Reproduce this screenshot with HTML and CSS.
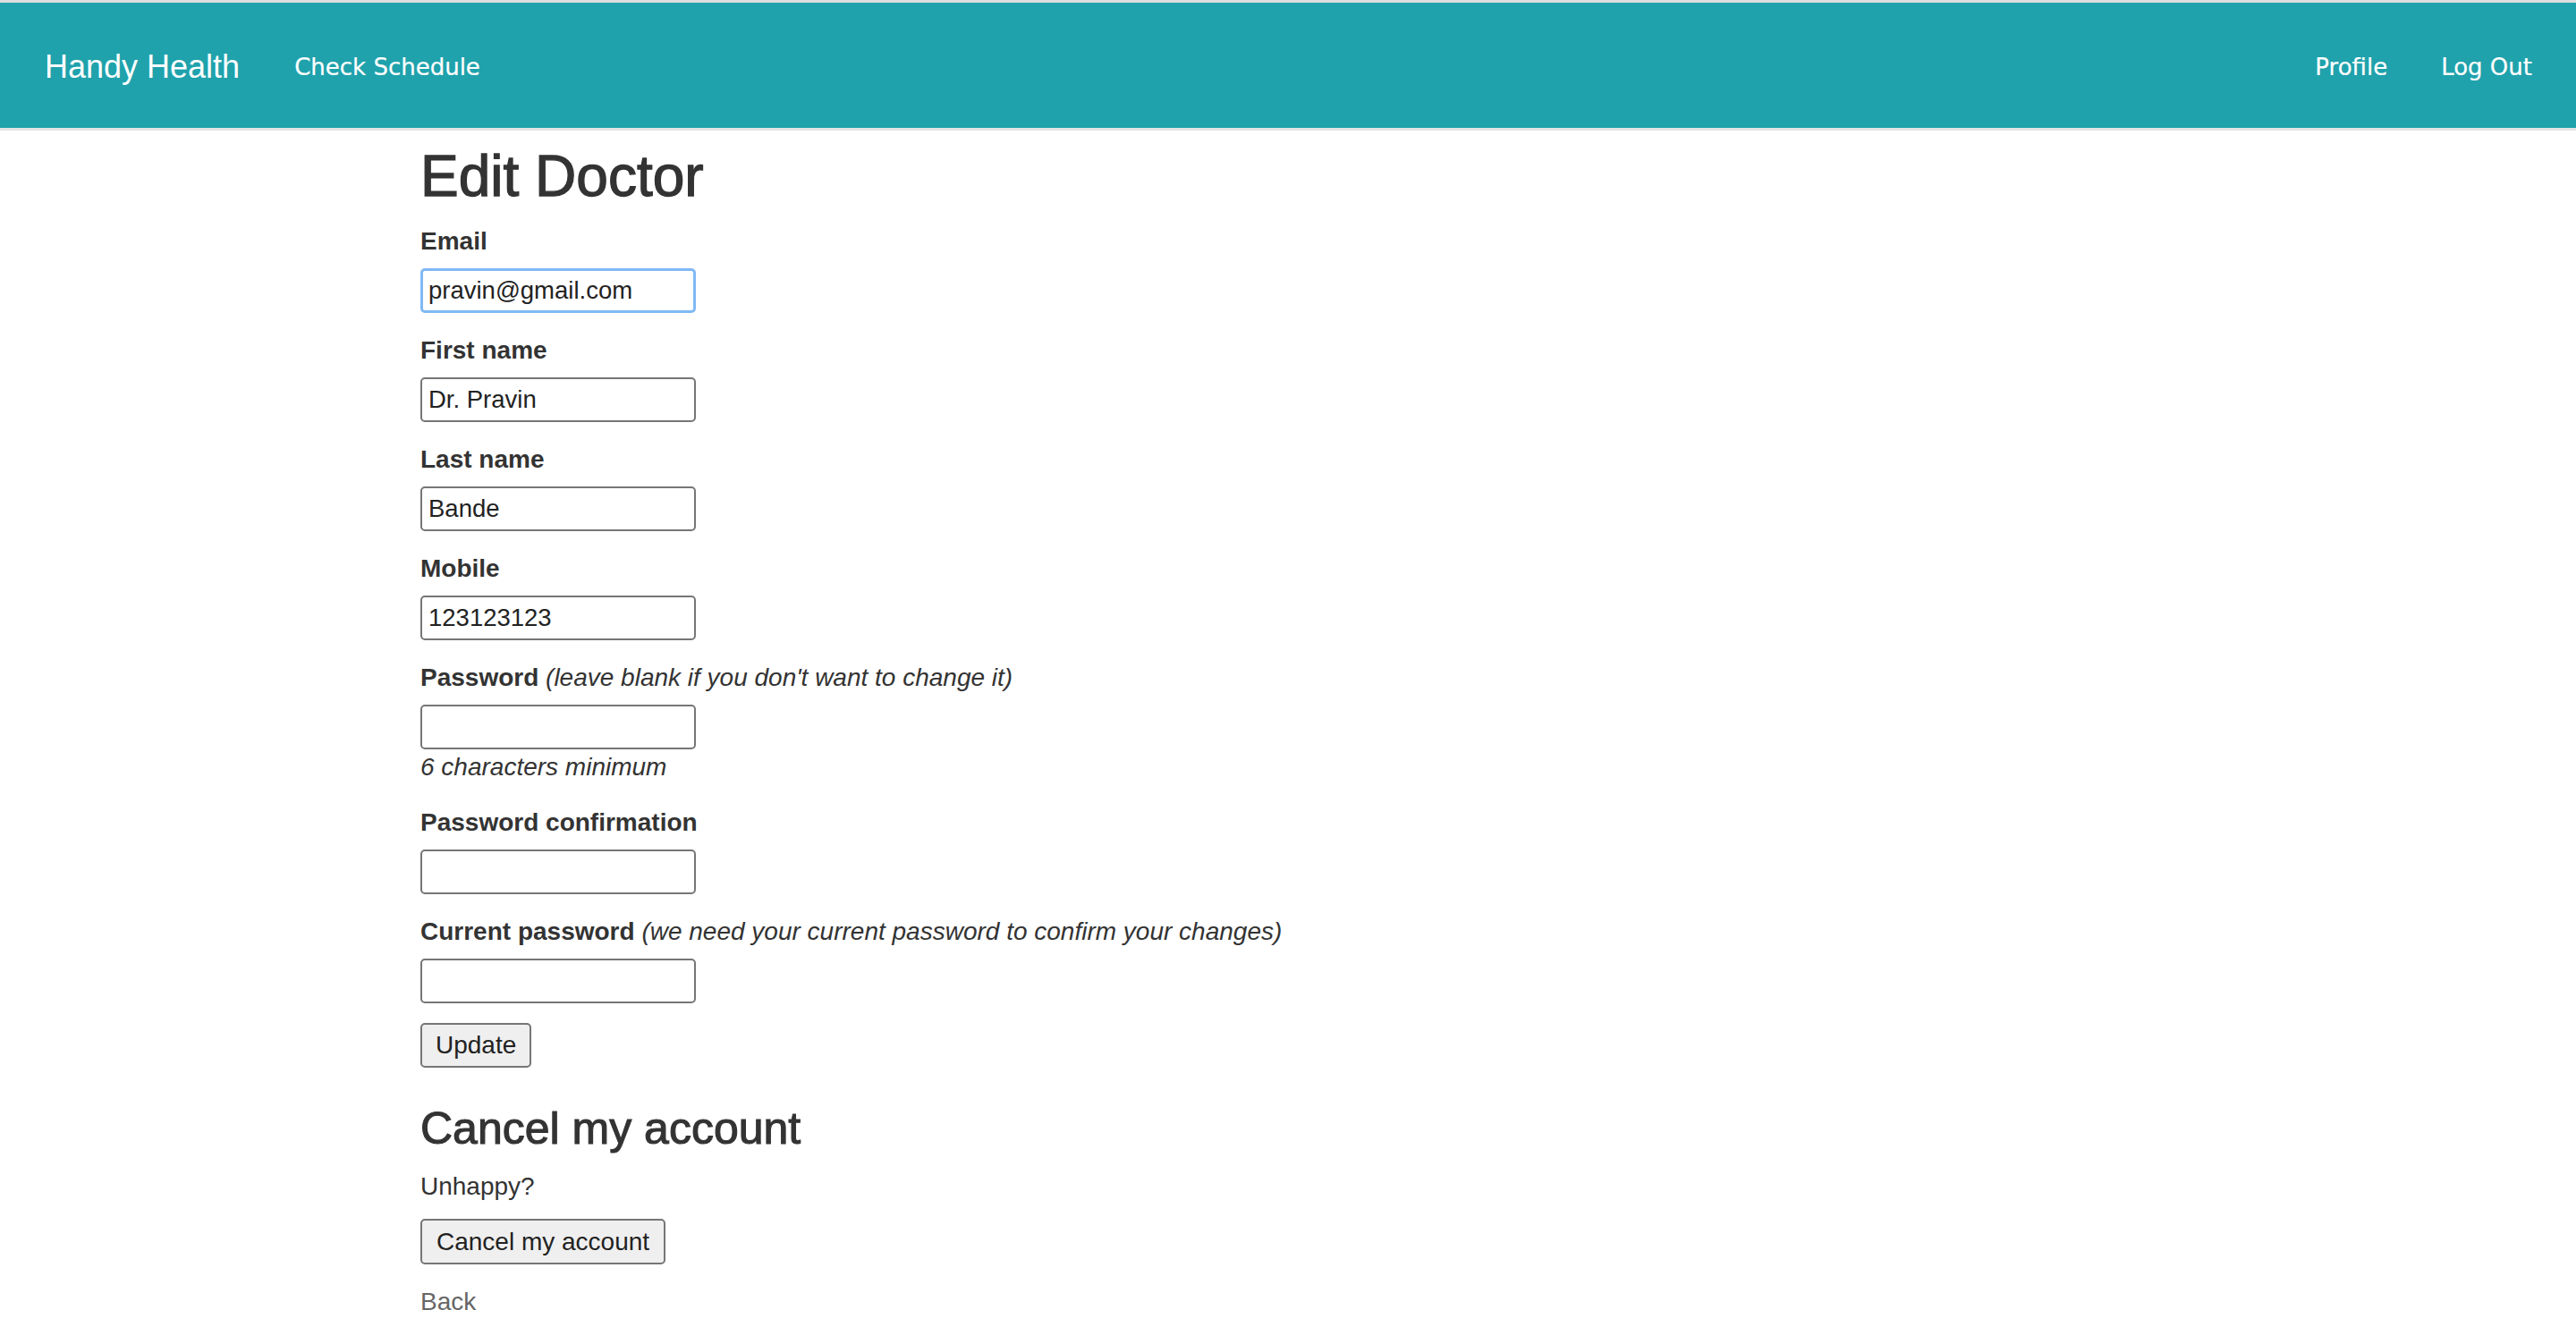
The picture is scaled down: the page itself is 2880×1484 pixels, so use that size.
FILE: index.html
```html
<!DOCTYPE html>
<html lang="en">
<head>
<meta charset="utf-8">
<title>Edit Doctor - Handy Health</title>
<link rel="stylesheet" href="styles.css">
</head>
<body>
<header class="navbar">
  <a class="navbar__brand" href="#">Handy Health</a>
  <nav class="navbar__links">
    <a class="navbar__link" href="#">Check Schedule</a>
  </nav>
  <nav class="navbar__links navbar__links--right">
    <a class="navbar__link" href="#">Profile</a>
    <a class="navbar__link" href="#">Log Out</a>
  </nav>
</header>

<main class="page">
  <h1 class="page__title">Edit Doctor</h1>

  <form class="form">
    <div class="field">
      <label class="field__label" for="email">Email</label>
      <input class="field__input field__input--focus" id="email" type="email" value="pravin@gmail.com">
    </div>
    <div class="field">
      <label class="field__label" for="first">First name</label>
      <input class="field__input" id="first" type="text" value="Dr. Pravin">
    </div>
    <div class="field">
      <label class="field__label" for="last">Last name</label>
      <input class="field__input" id="last" type="text" value="Bande">
    </div>
    <div class="field">
      <label class="field__label" for="mobile">Mobile</label>
      <input class="field__input" id="mobile" type="text" value="123123123">
    </div>
    <div class="field">
      <label class="field__label" for="password">Password <i class="field__note">(leave blank if you don't want to change it)</i></label>
      <input class="field__input" id="password" type="password">
      <em class="field__hint">6 characters minimum</em>
    </div>
    <div class="field">
      <label class="field__label" for="confirm">Password confirmation</label>
      <input class="field__input" id="confirm" type="password">
    </div>
    <div class="field">
      <label class="field__label" for="current">Current password <i class="field__note">(we need your current password to confirm your changes)</i></label>
      <input class="field__input" id="current" type="password">
    </div>
    <div class="actions">
      <button class="btn" type="button">Update</button>
    </div>
  </form>

  <h2 class="page__subtitle">Cancel my account</h2>
  <p class="page__text">Unhappy?</p>
  <div class="actions actions--cancel">
    <button class="btn btn--wide" type="button">Cancel my account</button>
  </div>
  <a class="page__back" href="#">Back</a>
</main>
</body>
</html>
```

FILE: styles.css
```css
* {
  box-sizing: border-box;
}

html,
body {
  margin: 0;
  padding: 0;
  background: #ffffff;
}

body {
  font-family: "Liberation Sans", Arial, Helvetica, sans-serif;
  font-size: 28px;
  color: #333333;
}

/* Navbar */
.navbar {
  display: flex;
  align-items: center;
  height: 146px;
  padding: 3px 49px 0 50px;
  background: #1fa2ac;
  border-top: 3px solid #dedede;
  border-bottom: 3px solid #e4e4e4;
}

.navbar__brand {
  font-family: "Liberation Sans", Arial, sans-serif;
  font-size: 36px;
  color: #ffffff;
  text-decoration: none;
  margin-right: 61px;
}

.navbar__links {
  display: flex;
  gap: 60px;
}

.navbar__links--right {
  margin-left: auto;
}

.navbar__link {
  font-family: "DejaVu Sans", Verdana, sans-serif;
  font-size: 26px;
  color: #ffffff;
  text-decoration: none;
  -webkit-text-stroke: 0.2px #ffffff;
}

/* Page */
.page {
  padding: 16px 0 40px 470px;
}

.page__title {
  margin: 0;
  font-size: 64px;
  line-height: 70px;
  font-weight: normal;
  -webkit-text-stroke: 1.3px #333333;
  color: #333333;
}

.form {
  margin-top: 18px;
}

.field {
  margin-bottom: 22px;
}

.field__label {
  display: block;
  font-weight: bold;
  line-height: 40px;
  margin-bottom: 10px;
  color: #333333;
}

.field__note {
  font-weight: normal;
  font-style: italic;
}

.field__input {
  display: block;
  width: 308px;
  height: 50px;
  margin: 0;
  padding: 0 7px;
  font-family: "Liberation Sans", Arial, sans-serif;
  font-size: 27.5px;
  color: #222222;
  background: #ffffff;
  border: 2px solid #767676;
  border-radius: 5px;
  outline: none;
}

.field__input--focus {
  border: 3px solid #80b9f5;
  padding: 0 6px;
}

.field__hint {
  display: block;
  font-style: italic;
  line-height: 40px;
  color: #333333;
}

.actions {
  display: flex;
}

.btn {
  height: 50px;
  padding: 0 15px;
  font-family: "Liberation Sans", Arial, sans-serif;
  font-size: 28px;
  color: #222222;
  background: #efefef;
  border: 2px solid #767676;
  border-radius: 5px;
}

.btn--wide {
  height: 51px;
  padding: 0 16px;
}

.page__subtitle {
  margin: 41px 0 0;
  font-size: 50px;
  line-height: 54px;
  font-weight: normal;
  -webkit-text-stroke: 1.1px #333333;
  color: #333333;
}

.page__text {
  margin: 18px 0 0;
  line-height: 40px;
}

.actions--cancel {
  margin-top: 16px;
}

.page__back {
  display: block;
  margin-top: 22px;
  line-height: 40px;
  color: #666666;
  text-decoration: none;
}
```
